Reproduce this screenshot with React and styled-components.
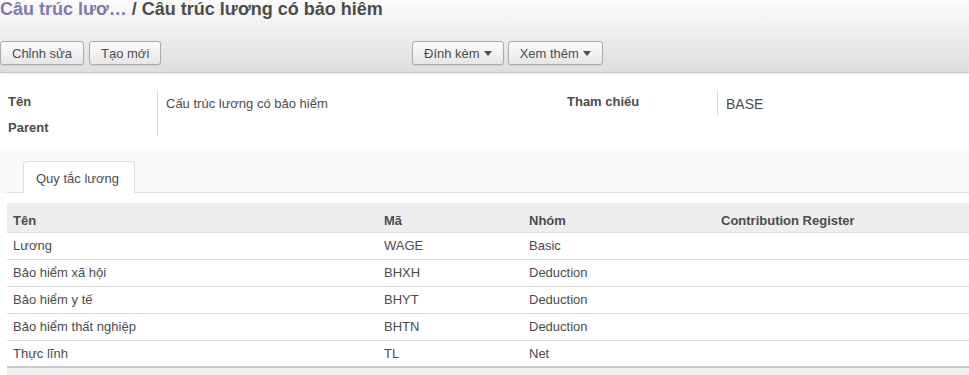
import styled, { createGlobalStyle } from "styled-components";

const GlobalStyle = createGlobalStyle`
  body {
    margin: 0;
    background: #ffffff;
    font-family: "Liberation Sans", Arial, sans-serif;
    font-size: 13px;
    color: #4c4c4c;
    overflow: hidden;
  }
`;

const Header = styled.div`
  height: 74px;
  background: linear-gradient(#fcfcfc, #dedede);
  border-bottom: 1px solid #c9c9c9;
  box-shadow: 0 1px 4px rgba(0, 0, 0, 0.08);
  position: relative;
  z-index: 1;
`;

const Title = styled.h2`
  margin: -2px 0 0 0;
  font-size: 18px;
  line-height: 22px;
  font-weight: bold;
  color: #4c4c4c;
  white-space: nowrap;
`;

const Crumb = styled.span`
  color: #7c7bad;
`;

const Toolbar = styled.div`
  margin-top: 21px;
  display: grid;
  grid-template-columns: 412px auto;
`;

const ButtonGroup = styled.div`
  display: flex;
  gap: ${(p) => p.$gap || 5}px;
`;

const Button = styled.button`
  box-sizing: border-box;
  height: 24px;
  padding: 0 ${(p) => p.$pad || 11}px;
  font-family: "Liberation Sans", Arial, sans-serif;
  font-size: 13px;
  color: #4c4c4c;
  background: linear-gradient(#fdfdfd, #e6e6e6);
  border: 1px solid #ababab;
  border-radius: 3px;
  box-shadow: 0 1px 1px rgba(0, 0, 0, 0.08);
  display: flex;
  align-items: center;
  gap: 4px;
`;

const Caret = styled.span`
  width: 0;
  height: 0;
  border-left: 4px solid transparent;
  border-right: 4px solid transparent;
  border-top: 5px solid #4c4c4c;
  margin-top: 1px;
`;

const Sheet = styled.div`
  background: #ffffff;
`;

const FormGrid = styled.div`
  padding: 17px 0 0 8px;
  display: grid;
  grid-template-columns: 149px 410px 150px 1fr;
  grid-auto-rows: 26px;
`;

const Label = styled.div`
  font-weight: bold;
  line-height: 24px;
`;

const Value = styled.div`
  border-left: 1px solid #dcdcdc;
  padding: 2px 0 0 8px;
  line-height: 24px;
  height: ${(p) => (p.$short ? "20px" : "auto")};
  box-sizing: border-box;
  font-size: ${(p) => (p.$big ? "14px" : "13px")};
`;

const Notebook = styled.div`
  margin-top: 7px;
  padding: 12px 0 0 7px;
  background: #fafafa;
`;

const TabBar = styled.div`
  display: flex;
  padding-left: 16px;
  border-bottom: 1px solid #dddddd;
  height: 31px;
`;

const Tab = styled.div`
  box-sizing: border-box;
  height: 32px;
  padding: 0 15px 0 12px;
  line-height: 33px;
  background: #ffffff;
  border: 1px solid #dddddd;
  border-bottom-color: transparent;
  border-radius: 4px 4px 0 0;
`;

const TablePane = styled.div`
  background: #ffffff;
  padding: 10px 0 0 7px;
`;

const Table = styled.table`
  width: 100%;
  border-collapse: collapse;
  table-layout: fixed;
`;

const HeadCell = styled.th`
  text-align: left;
  font-weight: bold;
  height: 29px;
  padding: 6px 6px 0 6px;
  background: #eeeeee;
  border-bottom: 1px solid #dddddd;
  width: ${(p) => p.$w || "auto"};
  box-sizing: border-box;
`;

const Cell = styled.td`
  height: 27px;
  padding: 0 6px;
  border-bottom: 1px solid #dddddd;
  box-sizing: border-box;
  white-space: nowrap;
`;

const FootCell = styled.td`
  height: 8px;
  padding: 0;
  background: #efefef;
  border-top: 2px solid #cacaca;
  border-bottom: 1px solid #dddddd;
`;

const rules = [
  { name: "Lương", code: "WAGE", group: "Basic" },
  { name: "Bảo hiểm xã hội", code: "BHXH", group: "Deduction" },
  { name: "Bảo hiểm y tế", code: "BHYT", group: "Deduction" },
  { name: "Bảo hiểm thất nghiệp", code: "BHTN", group: "Deduction" },
  { name: "Thực lĩnh", code: "TL", group: "Net" },
];

export default function App() {
  return (
    <>
      <GlobalStyle />
      <Header>
        <Title>
          <Crumb>Câu trúc lươ…</Crumb> / Câu trúc lương có bảo hiêm
        </Title>
        <Toolbar>
          <ButtonGroup $gap={5}>
            <Button $pad={11}>Chỉnh sửa</Button>
            <Button $pad={11}>Tạo mới</Button>
          </ButtonGroup>
          <ButtonGroup $gap={4}>
            <Button $pad={11}>
              Đính kèm <Caret />
            </Button>
            <Button $pad={11}>
              Xem thêm <Caret />
            </Button>
          </ButtonGroup>
        </Toolbar>
      </Header>
      <Sheet>
        <FormGrid>
          <Label>Tên</Label>
          <Value>Cấu trúc lương có bảo hiểm</Value>
          <Label>Tham chiếu</Label>
          <Value $big>BASE</Value>
          <Label>Parent</Label>
          <Value $short />
        </FormGrid>
        <Notebook>
          <TabBar>
            <Tab>Quy tắc lương</Tab>
          </TabBar>
        </Notebook>
        <TablePane>
          <Table>
            <thead>
              <tr>
                <HeadCell $w="371px">Tên</HeadCell>
                <HeadCell $w="145px">Mã</HeadCell>
                <HeadCell $w="192px">Nhóm</HeadCell>
                <HeadCell>Contribution Register</HeadCell>
              </tr>
            </thead>
            <tbody>
              {rules.map((r) => (
                <tr key={r.code}>
                  <Cell>{r.name}</Cell>
                  <Cell>{r.code}</Cell>
                  <Cell>{r.group}</Cell>
                  <Cell />
                </tr>
              ))}
            </tbody>
            <tfoot>
              <tr>
                <FootCell colSpan={4} />
              </tr>
            </tfoot>
          </Table>
        </TablePane>
      </Sheet>
    </>
  );
}
